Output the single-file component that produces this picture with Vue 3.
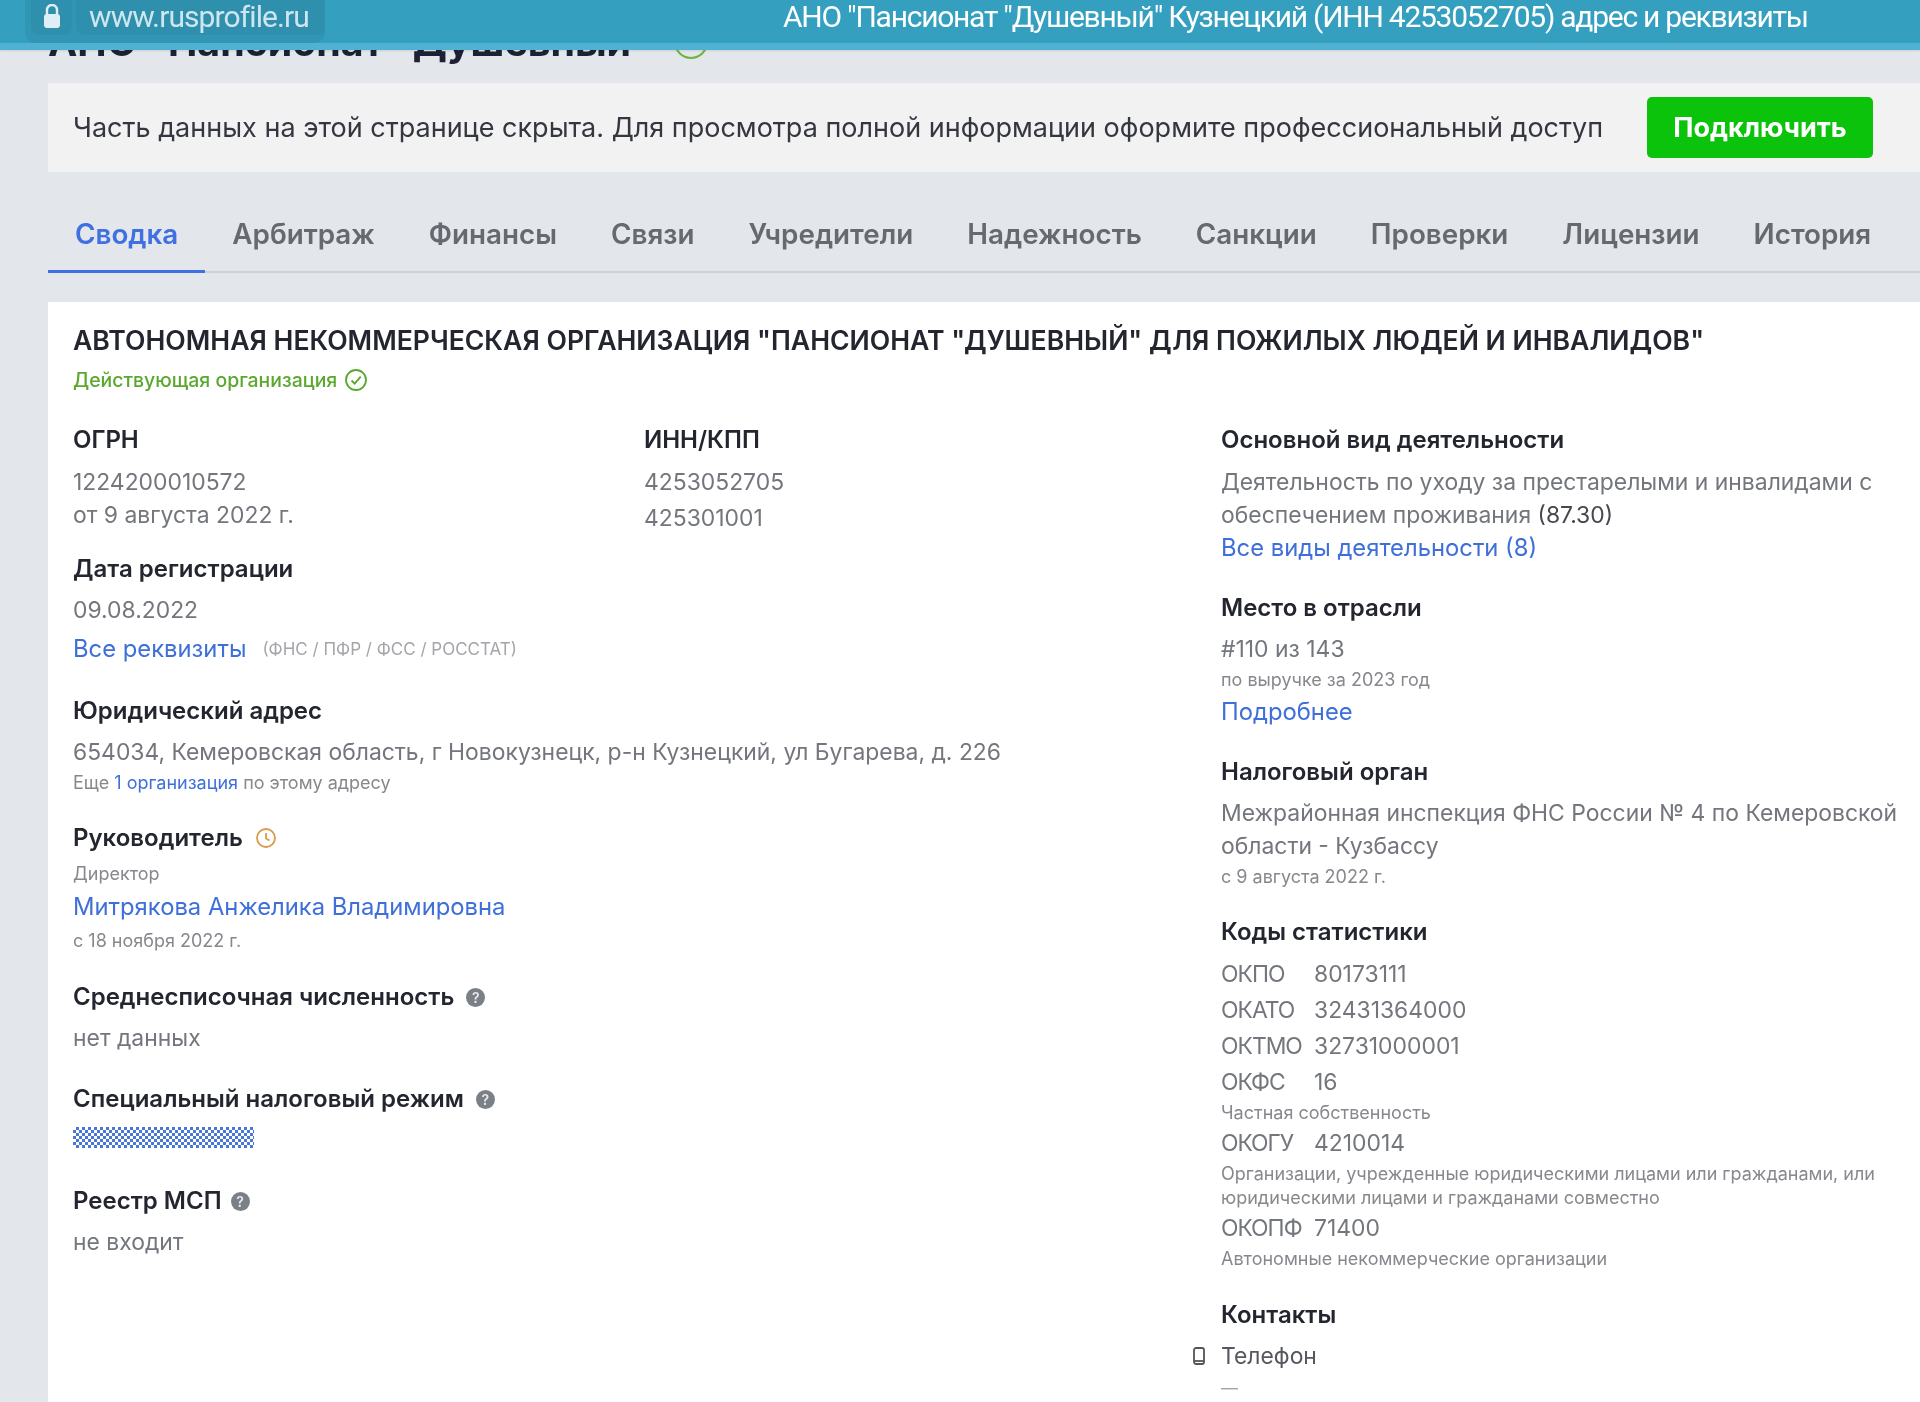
<script setup>
const tabs = ["Сводка", "Арбитраж", "Финансы", "Связи", "Учредители", "Надежность", "Санкции", "Проверки", "Лицензии", "История"];

const codes = [
  { name: "ОКПО", value: "80173111" },
  { name: "ОКАТО", value: "32431364000" },
  { name: "ОКТМО", value: "32731000001" },
  { name: "ОКФС", value: "16", note: "Частная собственность" },
  { name: "ОКОГУ", value: "4210014", note: "Организации, учрежденные юридическими лицами или гражданами, или юридическими лицами и гражданами совместно" },
  { name: "ОКОПФ", value: "71400", note: "Автономные некоммерческие организации" },
];
</script>

<template>
  <div class="page">
    <header class="bar">
      <div class="addr">
        <span class="lock">
          <svg width="18" height="26" viewBox="0 0 18 26"><path d="M4 11V6a5 5 0 0 1 10 0v5" fill="none" stroke="#dfeff5" stroke-width="2.4" /><rect x="1" y="10" width="16" height="14" rx="3" fill="#dfeff5" /></svg>
        </span>
        <span class="url">www.rusprofile.ru</span>
      </div>
      <div class="bar-title">АНО "Пансионат "Душевный" Кузнецкий (ИНН 4253052705) адрес и реквизиты</div>
    </header>

    <div class="head">
      <h1>АНО "Пансионат "Душевный"</h1>
      <span class="head-ok"></span>
    </div>

    <div class="notice">
      <span>Часть данных на этой странице скрыта. Для просмотра полной информации оформите профессиональный доступ</span>
      <button class="connect">Подключить</button>
    </div>

    <nav class="tabs">
      <a v-for="(t, i) in tabs" :key="t" class="tab" :class="{ active: i === 0 }">{{ t }}</a>
    </nav>

    <section class="card">
      <h2>АВТОНОМНАЯ НЕКОММЕРЧЕСКАЯ ОРГАНИЗАЦИЯ "ПАНСИОНАТ "ДУШЕВНЫЙ" ДЛЯ ПОЖИЛЫХ ЛЮДЕЙ И ИНВАЛИДОВ"</h2>
      <div class="status">
        Действующая организация
        <svg width="24" height="24" viewBox="0 0 24 24" fill="none" stroke="#5aa82e" stroke-width="1.8"><circle cx="12" cy="12" r="10" /><path d="M7.5 12.5l3.2 3.2 6-7" /></svg>
      </div>

      <div class="columns">
        <div class="left">
          <div class="ids">
            <div class="id-col">
              <div class="label">ОГРН</div>
              <div class="val first wide">1224200010572</div>
              <div class="val">от 9 августа 2022 г.</div>
            </div>
            <div class="id-col">
              <div class="label">ИНН/КПП</div>
              <div class="val first wide">4253052705</div>
              <div class="val gap3">425301001</div>
            </div>
          </div>

          <div class="block b-reg">
            <div class="label">Дата регистрации</div>
            <div class="val first">09.08.2022</div>
            <div class="links">
              <a class="link">Все реквизиты</a>
              <span class="tiny">(ФНС / ПФР / ФСС / РОССТАТ)</span>
            </div>
          </div>

          <div class="block b-addr">
            <div class="label">Юридический адрес</div>
            <div class="val first">654034, Кемеровская область, г Новокузнецк, р-н Кузнецкий, ул Бугарева, д. 226</div>
            <div class="small more">Еще <a class="blue">1 организация</a> по этому адресу</div>
          </div>

          <div class="block b-head">
            <div class="label">
              Руководитель
              <svg width="22" height="22" viewBox="0 0 22 22" fill="none" stroke="#dc9a4a" stroke-width="1.8"><circle cx="11" cy="11" r="9" /><path d="M11 6v5.5l3.5 2" /></svg>
            </div>
            <div class="small post">Директор</div>
            <a class="link name">Митрякова Анжелика Владимировна</a>
            <div class="small since">с 18 ноября 2022 г.</div>
          </div>

          <div class="block b-staff">
            <div class="label">Среднесписочная численность <span class="help">?</span></div>
            <div class="val first">нет данных</div>
          </div>

          <div class="block b-tax">
            <div class="label">Специальный налоговый режим <span class="help">?</span></div>
            <div class="hatch"></div>
          </div>

          <div class="block b-msp">
            <div class="label">Реестр МСП <span class="help near">?</span></div>
            <div class="val first">не входит</div>
          </div>
        </div>

        <div class="right">
          <div class="label">Основной вид деятельности</div>
          <div class="val first wide">Деятельность по уходу за престарелыми и инвалидами с</div>
          <div class="val">обеспечением проживания <span class="dark">(87.30)</span></div>
          <a class="link all">Все виды деятельности (8)</a>

          <div class="block r-place">
            <div class="label">Место в отрасли</div>
            <div class="val first">#110 из 143</div>
            <div class="small rev">по выручке за 2023 год</div>
            <a class="link more-link">Подробнее</a>
          </div>

          <div class="block r-tax">
            <div class="label">Налоговый орган</div>
            <div class="val first">Межрайонная инспекция ФНС России № 4 по Кемеровской</div>
            <div class="val">области - Кузбассу</div>
            <div class="small rev">с 9 августа 2022 г.</div>
          </div>

          <div class="block r-codes">
            <div class="label">Коды статистики</div>
            <div class="code-list">
              <template v-for="c in codes" :key="c.name">
                <div class="code"><span class="code-name">{{ c.name }}</span><span>{{ c.value }}</span></div>
                <div v-if="c.note" class="small note">{{ c.note }}</div>
              </template>
            </div>
          </div>

          <div class="block r-contacts">
            <div class="label">Контакты</div>
            <div class="phone">
              <svg class="phone-icon" width="14" height="20" viewBox="0 0 14 20" fill="none" stroke="#555" stroke-width="1.8"><rect x="2" y="2" width="10" height="16" rx="2" /><path d="M2 15h10" /></svg>
              <span>Телефон</span>
            </div>
            <div class="dash">—</div>
          </div>
        </div>
      </div>
    </section>
  </div>
</template>

<style>
body {
  margin: 0;
  background: #e3e6ea;
}
</style>

<style scoped>
.page {
  position: relative;
  height: 1402px;
  overflow: hidden;
  background: #e3e6ea;
  font-family: Inter, "Noto Sans", sans-serif;
  color: #23262f;
  filter: blur(0.5px);
}

/* верхняя плашка лежит поверх страницы */
.bar {
  position: absolute;
  top: 0;
  left: 0;
  right: 0;
  z-index: 2;
  height: 43px;
  background: #359fc0;
  border-bottom: 7px solid #4fb2d2;
  display: flex;
  align-items: flex-start;
  box-shadow: 0 1px 2px rgba(0, 0, 0, 0.1);
}

.addr {
  margin-left: 25px;
  width: 300px;
  height: 43px;
  background: #3196b6;
  border-radius: 0 0 10px 10px;
  display: flex;
  gap: 4px;
  padding-left: 6px;
  box-sizing: border-box;
}

.lock {
  width: 41px;
  height: 35px;
  display: flex;
  justify-content: center;
  padding-top: 4px;
  box-sizing: border-box;
  background: #2f90ae;
  border-radius: 0 0 8px 8px;
}

.url {
  flex: 1;
  height: 35px;
  background: #2f90ae;
  border-radius: 0 0 8px 8px;
  color: #cfe6ef;
  font-family: Roboto, sans-serif;
  font-size: 30px;
  line-height: 33px;
  padding-left: 13px;
  letter-spacing: -0.9px;
}

.bar-title {
  margin-left: 458px;
  color: #fff;
  font-family: Roboto, sans-serif;
  font-size: 30px;
  line-height: 33px;
  letter-spacing: -1.25px;
  white-space: nowrap;
}

.head {
  display: flex;
  align-items: center;
  padding: 18px 0 0 48px;
  height: 47px;
  box-sizing: content-box;
}

.head h1 {
  margin: 0;
  font-size: 39.3px;
  line-height: 47px;
  font-weight: 700;
  color: #1c2233;
  white-space: nowrap;
}

.head-ok {
  margin-left: 22px;
  width: 30px;
  height: 30px;
  border: 2px solid #6cb33f;
  border-radius: 50%;
}

.notice {
  margin: 18px 0 0 48px;
  height: 89px;
  background: #f2f2f2;
  display: flex;
  align-items: center;
  padding-left: 25px;
  font-size: 27px;
  color: #34373f;
  white-space: nowrap;
}

.connect {
  position: absolute;
  left: 1647px;
  top: 97px;
  width: 226px;
  height: 61px;
  background: #0bc30b;
  border: none;
  border-radius: 5px;
  color: #fff;
  font-family: inherit;
  font-size: 27px;
  font-weight: 700;
}

.tabs {
  margin: 0 0 0 48px;
  height: 101px;
  display: flex;
  align-items: flex-start;
  border-bottom: 2px solid #cdd0d4;
  box-sizing: border-box;
  padding-top: 40px;
}

.tab {
  font-size: 27.8px;
  line-height: 44px;
  font-weight: 600;
  color: #666a70;
  padding: 0 27px;
}

.tab.active {
  color: #3f6fe0;
  height: 61px;
  box-sizing: border-box;
  border-bottom: 3px solid #3f6fe0;
}

.card {
  margin: 29px 0 0 48px;
  height: 1100px;
  background: #fff;
  padding: 20px 0 0 25px;
  box-sizing: border-box;
}

.card h2 {
  margin: 0;
  font-size: 26.6px;
  line-height: 36px;
  font-weight: 600;
  white-space: nowrap;
  color: #23262f;
}

.status {
  display: flex;
  align-items: center;
  gap: 7px;
  margin-top: 4px;
  height: 36px;
  font-size: 19.4px;
  font-weight: 500;
  color: #5aa82e;
}

.columns {
  display: flex;
  margin-top: 26px;
}

.left {
  width: 1148px;
}

.ids {
  display: flex;
}

.id-col {
  width: 571px;
}

.label {
  display: flex;
  align-items: center;
  gap: 12px;
  font-size: 24px;
  line-height: 32px;
  font-weight: 600;
  color: #23262f;
}

.val {
  font-size: 22.9px;
  line-height: 33px;
  color: #73767c;
  white-space: nowrap;
}

.val.first {
  margin-top: 9px;
}

.val.first.wide {
  margin-top: 10px;
}

.val.gap3 {
  margin-top: 3px;
}

.dark {
  color: #45484e;
}

.link {
  display: block;
  font-size: 23.8px;
  line-height: 33px;
  color: #3f6fd8;
}

.links {
  display: flex;
  align-items: center;
  gap: 16px;
  margin-top: 5px;
}

.tiny {
  font-size: 17px;
  color: #a3a5a9;
}

.small {
  font-size: 18px;
  line-height: 24px;
  color: #86888d;
}

.blue {
  color: #3f6fd8;
}

.b-reg { margin-top: 18px; }
.b-addr { margin-top: 30px; }
.b-head { margin-top: 27px; }
.b-staff { margin-top: 28px; }
.b-tax { margin-top: 28px; }
.b-msp { margin-top: 37px; }

.more { margin-top: 2px; }
.post { margin-top: 8px; }
.name { margin-top: 4px; }
.since { margin-top: 6px; }

.help {
  width: 19px;
  height: 19px;
  border-radius: 50%;
  background: #7b8087;
  color: #e8e9ea;
  font-size: 14px;
  line-height: 19px;
  text-align: center;
}

.help.near {
  margin-left: -3px;
}

.hatch {
  margin-top: 12px;
  width: 181px;
  height: 21px;
  background: repeating-conic-gradient(#4a78d8 0 25%, #fff 0 50%) 0 0 / 6px 6px;
}

.right {
  width: 690px;
}

.all { margin-top: -1px; }

.r-place { margin-top: 28px; }
.r-tax { margin-top: 28px; }
.r-codes { margin-top: 27px; }
.r-contacts { margin-top: 28px; }

.rev { margin-top: 2px; }
.more-link { margin-top: 3px; }

.code-list {
  margin-top: 8px;
}

.code {
  display: flex;
  font-size: 22.9px;
  line-height: 36px;
  color: #73767c;
}

.code-name {
  width: 93px;
  letter-spacing: -1px;
}

.note {
  width: 690px;
  line-height: 24px;
  margin-top: 1px;
}

.phone {
  display: flex;
  align-items: center;
  margin-top: 9px;
  font-size: 22.9px;
  line-height: 32px;
  color: #55585e;
}

.phone-icon {
  margin-left: -29px;
  margin-right: 15px;
}

.dash {
  font-size: 17px;
  line-height: 24px;
  color: #a3a5a9;
  margin-top: 4px;
}
</style>
